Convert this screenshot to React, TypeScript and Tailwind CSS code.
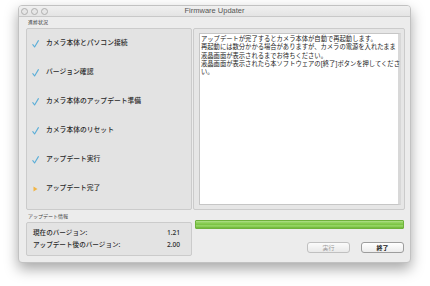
import React from "react";

const steps = [
  { label: "カメラ本体とパソコン接続", done: true },
  { label: "バージョン確認", done: true },
  { label: "カメラ本体のアップデート準備", done: true },
  { label: "カメラ本体のリセット", done: true },
  { label: "アップデート実行", done: true },
  { label: "アップデート完了", done: false },
];

const msg = [
  "アップデートが完了するとカメラ本体が自動で再起動します。",
  "再起動には数分かかる場合がありますが、カメラの電源を入れたまま",
  "液晶画面が表示されるまでお待ちください。",
  "液晶画面が表示されたら本ソフトウェアの[終了]ボタンを押してくださ",
  "い。",
];

function Check() {
  return (
    <svg width="7" height="8" viewBox="0 0 7 8">
      <path d="M0.8 4.6 L2.6 7 L6.4 0.6" fill="none" stroke="#5aaed8" strokeWidth="1.1" strokeLinecap="round" strokeLinejoin="round" />
    </svg>
  );
}

function Tri() {
  return (
    <svg width="7" height="8" viewBox="0 0 7 8">
      <path d="M1.5 1.5 L5.5 4 L1.5 6.5 Z" fill="#f2b544" />
    </svg>
  );
}

export default function App() {
  return (
    <div
      className="w-[430px] h-[286px] bg-white pt-[5px] pl-[18px]"
      style={{ fontFamily: '"Noto Sans", "Noto Sans CJK JP", sans-serif' }}
    >
      <div className="w-[393px] h-[258px] bg-[#ececec] rounded-[4px] border border-[#c2c2c2] shadow-[0_6px_14px_rgba(0,0,0,0.35)] flex flex-col overflow-hidden">
        <div className="h-[11px] relative flex items-center border-b border-[#c8c8c8] bg-gradient-to-b from-[#f0f0f0] to-[#e4e4e4]">
          <div className="flex gap-[3px] ml-[2px]">
            <div className="w-[7px] h-[7px] rounded-full border border-[#aeaeae] bg-[#e6e6e6]" />
            <div className="w-[7px] h-[7px] rounded-full border border-[#aeaeae] bg-[#e6e6e6]" />
            <div className="w-[7px] h-[7px] rounded-full border border-[#aeaeae] bg-[#e6e6e6]" />
          </div>
          <div className="absolute inset-0 flex items-center justify-center text-[7.5px] text-[#555] leading-none" style={{ fontFamily: '"Liberation Sans", sans-serif' }}>
            Firmware Updater
          </div>
        </div>
        <div className="flex pl-[7px]">
          <div className="w-[166px] flex flex-col">
            <div className="h-[11px] flex items-center pl-[2px] text-[5px] text-[#333] leading-none">進捗状況</div>
            <div className="h-[182px] rounded-[2px] border border-[#cbcbcb] bg-[#e3e3e3] flex flex-col">
              {steps.map((s) => (
                <div key={s.label} className="h-[29px] flex items-center pl-[5px]">
                  <div className="w-[14px] flex items-center">{s.done ? <Check /> : <Tri />}</div>
                  <span className="text-[6.8px] font-medium text-[#2a2a2a] leading-none">{s.label}</span>
                </div>
              ))}
            </div>
            <div className="h-[12px] flex items-center pl-[2px] text-[5px] text-[#444] leading-none">アップデート情報</div>
            <div className="h-[34px] rounded-[2px] border border-[#cbcbcb] bg-[#e3e3e3] flex flex-col justify-center gap-[5px] pl-[6px] pr-[11px] text-[6.6px] font-medium text-[#2a2a2a] leading-none">
              <div className="flex justify-between">
                <span>現在のバージョン:</span>
                <span>1.21</span>
              </div>
              <div className="flex justify-between">
                <span>アップデート後のバージョン:</span>
                <span>2.00</span>
              </div>
            </div>
          </div>
          <div className="w-[212px] ml-[1px] mt-[11px] flex flex-col">
            <div className="h-[182px] rounded-[2px] border border-[#cbcbcb] bg-[#e6e6e6] pl-[5px] pr-[3px] py-[4px]">
              <div className="h-full bg-white border border-[#c6c6c6] border-r-[3px] border-r-[#d8d8d8] px-[1px] pt-[1px] text-[6.3px] leading-[8.3px] text-[#222]">
                {msg.map((l) => (
                  <div key={l} className="whitespace-nowrap">{l}</div>
                ))}
              </div>
            </div>
            <div className="mt-[10px] ml-[2px] w-[209px] h-[9px] rounded-[1px] border border-[#6fb23c] bg-[linear-gradient(to_bottom,#b0e08a_0%,#8fd05c_25%,#7cc445_50%,#9ad86a_68%,#6cb534_100%)]" />
            <div className="mt-[13px] flex justify-end gap-[11px] pr-[1px]">
              <div className="w-[43px] h-[11px] rounded-[3px] border border-[#c0c0c0] bg-gradient-to-b from-[#fbfbfb] to-[#e9e9e9] flex items-center justify-center text-[6px] text-[#9a9a9a] leading-none">実行</div>
              <div className="w-[43px] h-[11px] rounded-[3px] border border-[#9d9d9d] bg-gradient-to-b from-[#ffffff] to-[#ececec] flex items-center justify-center text-[6px] font-bold text-[#222] leading-none">終了</div>
            </div>
          </div>
        </div>
      </div>
    </div>
  );
}
